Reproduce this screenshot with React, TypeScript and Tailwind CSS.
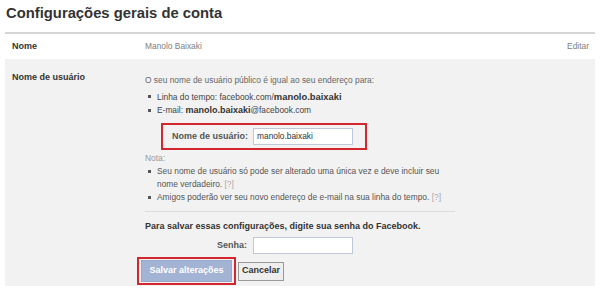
export default function App() {
  return (
    <div className="relative h-[295px] w-[600px] overflow-hidden bg-white font-['Liberation_Sans',Arial,sans-serif] text-[8.4px] text-[#333]">
      {/* Title */}
      <h1 className="pl-[6px] pt-[4px] text-[14.8px] font-bold leading-[18px] text-[#333]">
        Configurações gerais de conta
      </h1>

      <div className="mx-[5px] mt-[10px] border-t-2 border-[#d6d6d6]" />

      {/* Nome */}
      <div className="mx-[5px] flex h-[25px] items-center">
        <div className="w-[140px] pl-[7px] text-[9px] font-bold">Nome</div>
        <div className="flex-1 text-[#808080]">Manolo Baixaki</div>
        <div className="pr-[6px] text-[#808080]">Editar</div>
      </div>

      {/* Nome de usuário */}
      <div className="mx-[5px] flex h-[227px] bg-[#f2f2f2] pt-[12px]">
        <div className="w-[140px] pl-[7px] text-[9px] font-bold">Nome de usuário</div>
        <div className="w-[310px] pt-[3px]">
          <p className="leading-[13px] text-[#666]">O seu nome de usuário público é igual ao seu endereço para:</p>
          <ul className="mt-[3px] list-none pl-[3px] leading-[13px] text-[#444]">
            <li className="flex items-start gap-[6px]">
              <span className="mt-[5px] h-[3px] w-[3px] shrink-0 bg-[#555]" />
              <span>
                Linha do tempo: facebook.com/<b className="text-[9.4px] text-[#333]">manolo.baixaki</b>
              </span>
            </li>
            <li className="flex items-start gap-[6px]">
              <span className="mt-[5px] h-[3px] w-[3px] shrink-0 bg-[#555]" />
              <span>
                E-mail: <b className="text-[9px] text-[#333]">manolo.baixaki</b>@facebook.com
              </span>
            </li>
          </ul>

          <div className="ml-[16px] mt-[6px] flex h-[27px] w-[206px] items-center border-2 border-[#d3262d] pl-[9px]">
            <span className="w-[81px] text-[9px] font-bold text-[#555]">Nome de usuário:</span>
            <div className="flex h-[17px] w-[100px] items-center border border-[#bdc7d8] bg-white pl-[3px] text-[#333]">
              manolo.baixaki
            </div>
          </div>

          <p className="mt-[2px] leading-[13px] text-[#999]">Nota:</p>
          <ul className="list-none pl-[3px] leading-[13px] text-[#555]">
            <li className="flex items-start gap-[6px]">
              <span className="mt-[5px] h-[3px] w-[3px] shrink-0 bg-[#555]" />
              <span>
                Seu nome de usuário só pode ser alterado uma única vez e deve incluir seu nome verdadeiro.{" "}
                <span className="text-[#aaa]">[?]</span>
              </span>
            </li>
            <li className="flex items-start gap-[6px]">
              <span className="mt-[5px] h-[3px] w-[3px] shrink-0 bg-[#555]" />
              <span>
                Amigos poderão ver seu novo endereço de e-mail na sua linha do tempo.{" "}
                <span className="text-[#aaa]">[?]</span>
              </span>
            </li>
          </ul>

          <div className="mt-[7px] border-t border-[#dcdcdc]" />

          <p className="mt-[8px] text-[9px] font-bold leading-[13px] text-[#333]">
            Para salvar essas configurações, digite sua senha do Facebook.
          </p>
          <div className="mt-[4px] flex items-center">
            <span className="w-[108px] pr-[6px] text-right text-[9px] font-bold text-[#555]">Senha:</span>
            <div className="h-[17px] w-[100px] border border-[#bdc7d8] bg-white" />
          </div>

          <div className="-ml-[8px] mt-[3px] flex items-center gap-[2px]">
            <div className="flex h-[28px] w-[99px] items-center justify-center border-2 border-[#d3262d]">
              <button className="h-[22px] w-[91px] border border-[#98a9cc] bg-[#a3b3d4] text-[9px] font-bold text-white">
                Salvar alterações
              </button>
            </div>
            <button className="h-[19px] w-[46px] border border-[#999] bg-[#eeeeee] text-[9px] font-bold text-[#333]">
              Cancelar
            </button>
          </div>
        </div>
      </div>
    </div>
  )
}
